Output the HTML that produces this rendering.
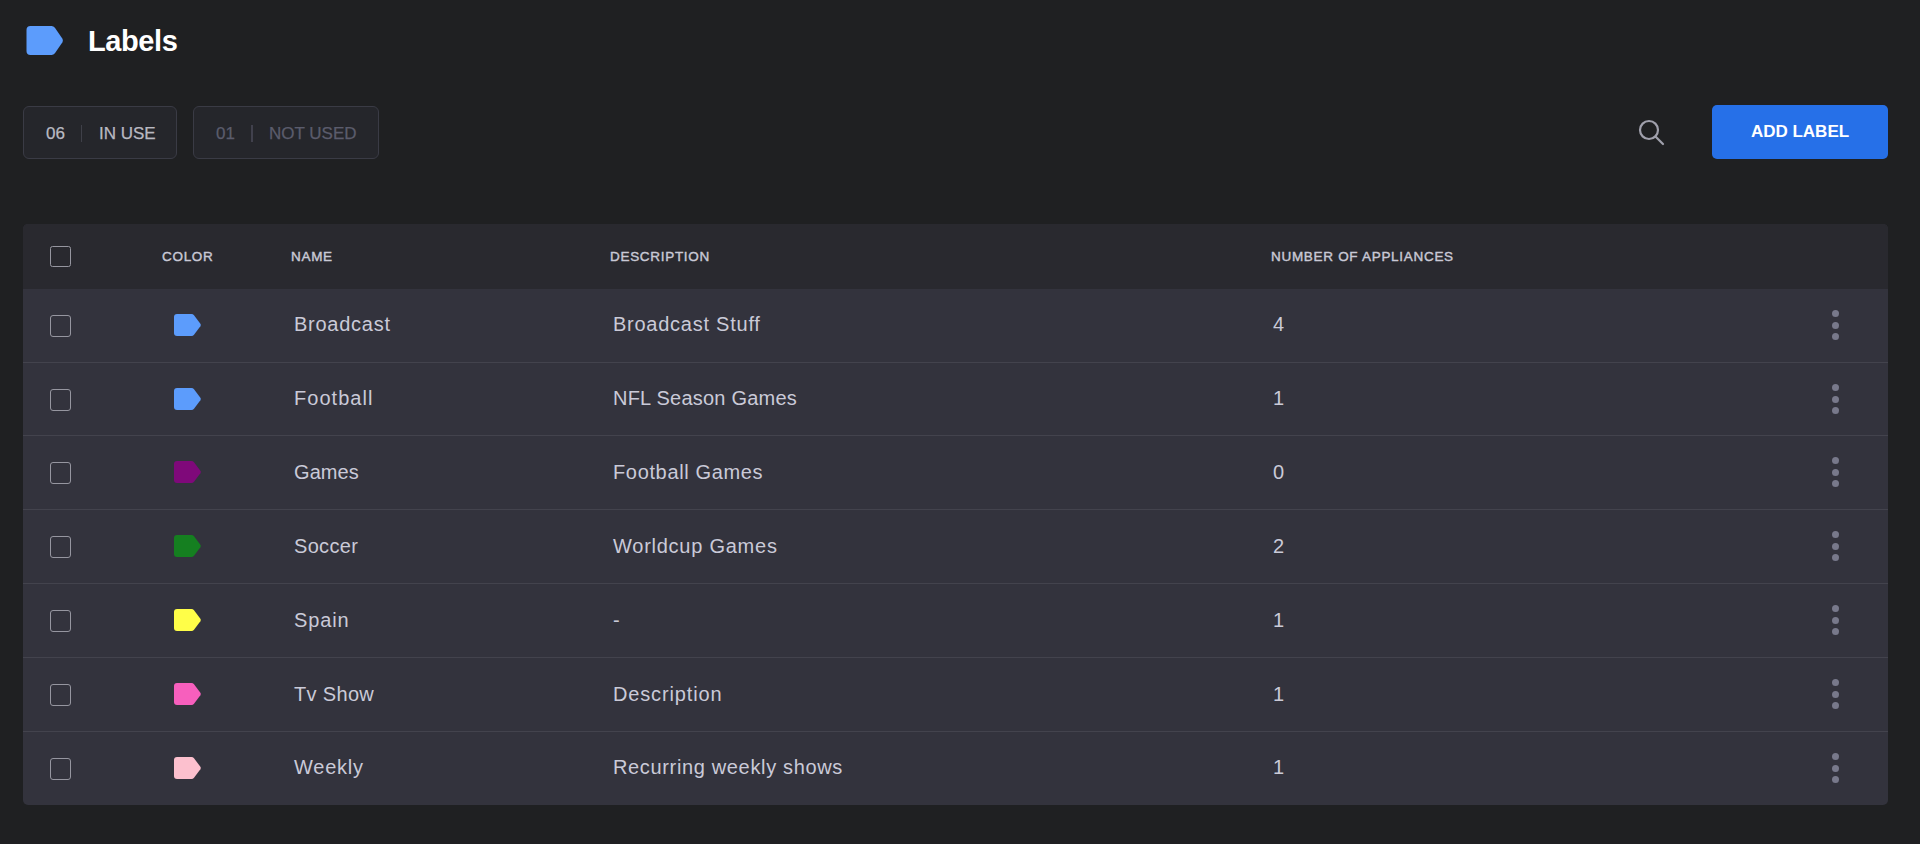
<!DOCTYPE html>
<html><head><meta charset="utf-8">
<style>
*{box-sizing:border-box;margin:0;padding:0}
html,body{width:1920px;height:844px;overflow:hidden;background:#1f2022;font-family:"Liberation Sans",sans-serif;}
.abs{position:absolute}
.title{left:88px;top:23.5px;letter-spacing:-0.4px;font-size:29px;font-weight:bold;color:#ffffff;line-height:34px;white-space:nowrap}
.stat{top:106px;height:53px;border:1px solid #3a3b45;border-radius:6px;background:#25262b}
.stat span{position:absolute;top:1px;line-height:51px;font-size:17px;-webkit-text-stroke:0.25px currentColor;white-space:nowrap}
.stat i{position:absolute;top:18px;width:1px;height:17px;background:#3f4049}
.btn{left:1712px;top:105px;width:176px;height:54px;background:#2670e8;border-radius:5px;color:#fff;font-weight:bold;font-size:17px;line-height:54px;text-align:center}
.table{left:23px;top:224px;width:1865px;height:581px;border-radius:5px;overflow:hidden;background:#33333d}
.thead{position:absolute;left:0;top:0;width:1865px;height:65px;background:#29292f}
.th{position:absolute;top:0;line-height:65px;font-size:13.5px;font-weight:normal;color:#c9c9d6;white-space:nowrap;letter-spacing:0.7px;-webkit-text-stroke:0.4px currentColor}
.row{position:absolute;left:0;width:1865px;height:74px;border-top:1px solid #43434d}
.row.first{border-top:none}
.cb{position:absolute;left:27px;width:21px;height:22px;border:1.5px solid #9696a0;border-radius:3px}
.td{position:absolute;font-size:20px;color:#cacad8;white-space:nowrap;line-height:24px;letter-spacing:0.75px}
.tag{position:absolute}
.dots{position:absolute;left:1809px;width:8px}
.dots b{display:block;width:7px;height:7px;border-radius:50%;background:#78798b;margin-bottom:4.5px}
</style></head>
<body>
<svg class="abs" style="left:26px;top:26px" width="37" height="29" viewBox="0 0 37 29">
<path d="M4.5 0 H25.5 Q27.6 0 28.9 1.7 L36.3 12.6 Q37.3 14.5 36.3 16.4 L28.9 27.3 Q27.6 29 25.5 29 H4.5 Q0.5 29 0.5 25 V4 Q0.5 0 4.5 0 Z" fill="#5c9cfc"/>
</svg>
<div class="abs title">Labels</div>

<div class="abs stat" style="left:23px;width:154px">
  <span style="left:22px;color:#b9b9c2">06</span><i style="left:57px"></i><span style="left:75px;color:#b9b9c2">IN USE</span>
</div>
<div class="abs stat" style="left:193px;width:186px">
  <span style="left:22px;color:#5b5c6c">01</span><i style="left:57px;width:2px;background:#41414d"></i><span style="left:75px;color:#5b5c6c">NOT USED</span>
</div>

<svg class="abs" style="left:1630px;top:112px" width="40" height="40" viewBox="0 0 40 40">
<circle cx="19" cy="18" r="9" fill="none" stroke="#a0a0ac" stroke-width="2.2"/>
<line x1="25.5" y1="24.5" x2="33" y2="32" stroke="#a0a0ac" stroke-width="2.2" stroke-linecap="round"/>
</svg>
<div class="abs btn">ADD LABEL</div>

<div class="abs table">
  <div class="thead">
    <div class="cb" style="top:22px;height:21px;border-radius:2.5px"></div>
    <div class="th" style="left:139px">COLOR</div>
    <div class="th" style="left:268px">NAME</div>
    <div class="th" style="left:587px">DESCRIPTION</div>
    <div class="th" style="left:1248px">NUMBER OF APPLIANCES</div>
  </div>
  <!--ROWS-->
  <div class="row first" style="top:65px;height:73px">
    <div class="cb" style="top:26px"></div>
    <svg class="tag" style="left:151px;top:25px" width="27" height="22" viewBox="0 0 27 22"><path d="M3 0 H17.5 Q19 0 20 1.3 L26.4 9.8 Q27.1 11 26.4 12.2 L20 20.7 Q19 22 17.5 22 H3 Q0 22 0 19 V3 Q0 0 3 0 Z" fill="#5c9cfc"/></svg>
    <div class="td" style="left:271px;top:23px;letter-spacing:0.75px">Broadcast</div>
    <div class="td" style="left:590px;top:23px;letter-spacing:0.75px">Broadcast Stuff</div>
    <div class="td" style="left:1250px;top:23px">4</div>
    <div class="dots" style="top:21px"><b></b><b></b><b></b></div>
  </div>
  <div class="row" style="top:138px;height:73px">
    <div class="cb" style="top:26px"></div>
    <svg class="tag" style="left:151px;top:25px" width="27" height="22" viewBox="0 0 27 22"><path d="M3 0 H17.5 Q19 0 20 1.3 L26.4 9.8 Q27.1 11 26.4 12.2 L20 20.7 Q19 22 17.5 22 H3 Q0 22 0 19 V3 Q0 0 3 0 Z" fill="#5c9cfc"/></svg>
    <div class="td" style="left:271px;top:23px;letter-spacing:1.04px">Football</div>
    <div class="td" style="left:590px;top:23px;letter-spacing:0.22px">NFL Season Games</div>
    <div class="td" style="left:1250px;top:23px">1</div>
    <div class="dots" style="top:21px"><b></b><b></b><b></b></div>
  </div>
  <div class="row" style="top:211px;height:74px">
    <div class="cb" style="top:26px"></div>
    <svg class="tag" style="left:151px;top:25px" width="27" height="22" viewBox="0 0 27 22"><path d="M3 0 H17.5 Q19 0 20 1.3 L26.4 9.8 Q27.1 11 26.4 12.2 L20 20.7 Q19 22 17.5 22 H3 Q0 22 0 19 V3 Q0 0 3 0 Z" fill="#7f097a"/></svg>
    <div class="td" style="left:271px;top:24px;letter-spacing:0.08px">Games</div>
    <div class="td" style="left:590px;top:24px;letter-spacing:0.65px">Football Games</div>
    <div class="td" style="left:1250px;top:24px">0</div>
    <div class="dots" style="top:21px"><b></b><b></b><b></b></div>
  </div>
  <div class="row" style="top:285px;height:74px">
    <div class="cb" style="top:26px"></div>
    <svg class="tag" style="left:151px;top:25px" width="27" height="22" viewBox="0 0 27 22"><path d="M3 0 H17.5 Q19 0 20 1.3 L26.4 9.8 Q27.1 11 26.4 12.2 L20 20.7 Q19 22 17.5 22 H3 Q0 22 0 19 V3 Q0 0 3 0 Z" fill="#157f20"/></svg>
    <div class="td" style="left:271px;top:24px;letter-spacing:0.31px">Soccer</div>
    <div class="td" style="left:590px;top:24px;letter-spacing:0.75px">Worldcup Games</div>
    <div class="td" style="left:1250px;top:24px">2</div>
    <div class="dots" style="top:21px"><b></b><b></b><b></b></div>
  </div>
  <div class="row" style="top:359px;height:74px">
    <div class="cb" style="top:26px"></div>
    <svg class="tag" style="left:151px;top:25px" width="27" height="22" viewBox="0 0 27 22"><path d="M3 0 H17.5 Q19 0 20 1.3 L26.4 9.8 Q27.1 11 26.4 12.2 L20 20.7 Q19 22 17.5 22 H3 Q0 22 0 19 V3 Q0 0 3 0 Z" fill="#fffe48"/></svg>
    <div class="td" style="left:271px;top:24px;letter-spacing:0.85px">Spain</div>
    <div class="td" style="left:590px;top:24px;letter-spacing:0.75px">-</div>
    <div class="td" style="left:1250px;top:24px">1</div>
    <div class="dots" style="top:21px"><b></b><b></b><b></b></div>
  </div>
  <div class="row" style="top:433px;height:74px">
    <div class="cb" style="top:26px"></div>
    <svg class="tag" style="left:151px;top:25px" width="27" height="22" viewBox="0 0 27 22"><path d="M3 0 H17.5 Q19 0 20 1.3 L26.4 9.8 Q27.1 11 26.4 12.2 L20 20.7 Q19 22 17.5 22 H3 Q0 22 0 19 V3 Q0 0 3 0 Z" fill="#f75fbd"/></svg>
    <div class="td" style="left:271px;top:24px;letter-spacing:0.33px">Tv Show</div>
    <div class="td" style="left:590px;top:24px;letter-spacing:0.85px">Description</div>
    <div class="td" style="left:1250px;top:24px">1</div>
    <div class="dots" style="top:21px"><b></b><b></b><b></b></div>
  </div>
  <div class="row" style="top:507px;height:74px">
    <div class="cb" style="top:26px"></div>
    <svg class="tag" style="left:151px;top:25px" width="27" height="22" viewBox="0 0 27 22"><path d="M3 0 H17.5 Q19 0 20 1.3 L26.4 9.8 Q27.1 11 26.4 12.2 L20 20.7 Q19 22 17.5 22 H3 Q0 22 0 19 V3 Q0 0 3 0 Z" fill="#fcc0ce"/></svg>
    <div class="td" style="left:271px;top:23px;letter-spacing:0.75px">Weekly</div>
    <div class="td" style="left:590px;top:23px;letter-spacing:0.65px">Recurring weekly shows</div>
    <div class="td" style="left:1250px;top:23px">1</div>
    <div class="dots" style="top:21px"><b></b><b></b><b></b></div>
  </div>
</div>
</body></html>
